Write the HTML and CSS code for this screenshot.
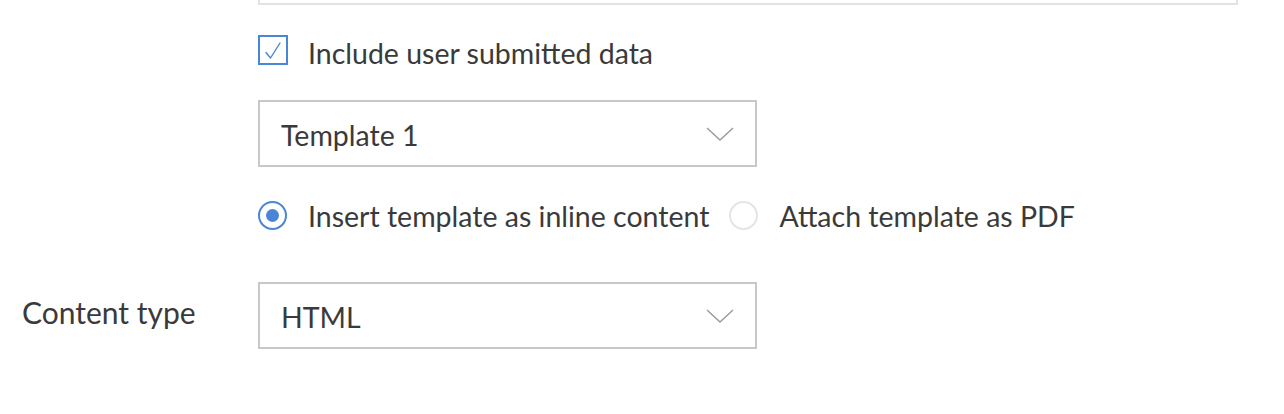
FILE: index.html
```html
<!DOCTYPE html>
<html>
<head>
<meta charset="utf-8">
<link rel="stylesheet" href="styles.css">
</head>
<body>
<div class="page">
  <div class="row">
    <div class="label"></div>
    <div class="field">
      <div class="topbox"></div>
      <label class="check">
        <span class="checkbox">
          <svg width="26" height="26" viewBox="0 0 26 26"><path d="M6 15.5 L10.5 21 L20 6" fill="none" stroke="#4a86d8" stroke-width="1.4" stroke-linecap="round" stroke-linejoin="round"/></svg>
        </span>
        <span class="text">Include user submitted data</span>
      </label>
      <div class="select first">
        <span class="value">Template 1</span>
        <svg class="chev" width="28" height="14" viewBox="0 0 28 14"><path d="M1 1 L14 13 L27 1" fill="none" stroke="#9a9a9a" stroke-width="1.4"/></svg>
      </div>
      <div class="radios">
        <label class="radio">
          <span class="circle on"><span class="dot"></span></span>
          <span class="text">Insert template as inline content</span>
        </label>
        <label class="radio">
          <span class="circle"></span>
          <span class="text">Attach template as PDF</span>
        </label>
      </div>
    </div>
  </div>
  <div class="row content">
    <div class="label">Content type</div>
    <div class="field">
      <div class="select">
        <span class="value">HTML</span>
        <svg class="chev" width="28" height="14" viewBox="0 0 28 14"><path d="M1 1 L14 13 L27 1" fill="none" stroke="#9a9a9a" stroke-width="1.4"/></svg>
      </div>
    </div>
  </div>
</div>
</body>
</html>
```

FILE: styles.css
```css
* { box-sizing: border-box; }
html, body { margin: 0; padding: 0; background: #fff; }
body {
  font-family: Lato, "Open Sans", sans-serif;
  color: #3a3a3a;
  font-size: 28.5px;
}
.page { width: 1284px; height: 414px; overflow: hidden; }
.row { display: flex; }
.label { width: 258px; flex: none; padding-left: 22px; }
.field { width: 980px; display: flex; flex-direction: column; }
.topbox {
  height: 5px;
  border: 2px solid #e2e2e2;
  border-top: none;
}
.check {
  display: flex;
  align-items: center;
  margin-top: 30px;
  height: 30px;
}
.checkbox {
  width: 30px; height: 30px;
  border: 2px solid #4a86d8;
  display: flex; align-items: center; justify-content: center;
  flex: none;
}
.check .text { margin-left: 20px; position: relative; top: 3px; }
.select {
  width: 499px;
  height: 67px;
  border: 2px solid #c8c8cc;
  display: flex;
  align-items: center;
  justify-content: space-between;
  padding: 0 21px 0 21px;
}
.select.first { margin-top: 35px; }
.select .value { position: relative; top: 1px; }
.chev { flex: none; }
.radios { display: flex; margin-top: 33px; gap: 20px; height: 30px; align-items: center; }
.radio { display: flex; align-items: center; }
.circle {
  width: 29px; height: 29px; border-radius: 50%;
  border: 2px solid #e2e4ea;
  display: flex; align-items: center; justify-content: center;
  flex: none;
}
.circle.on { border-color: #4a86d8; }
.dot { width: 13px; height: 13px; border-radius: 50%; background: #4a86d8; }
.radio .text { margin-left: 21px; position: relative; top: 1px; }
.content { margin-top: 52px; align-items: center; }
.content .label { position: relative; top: -4px; font-size: 30px; }
```
